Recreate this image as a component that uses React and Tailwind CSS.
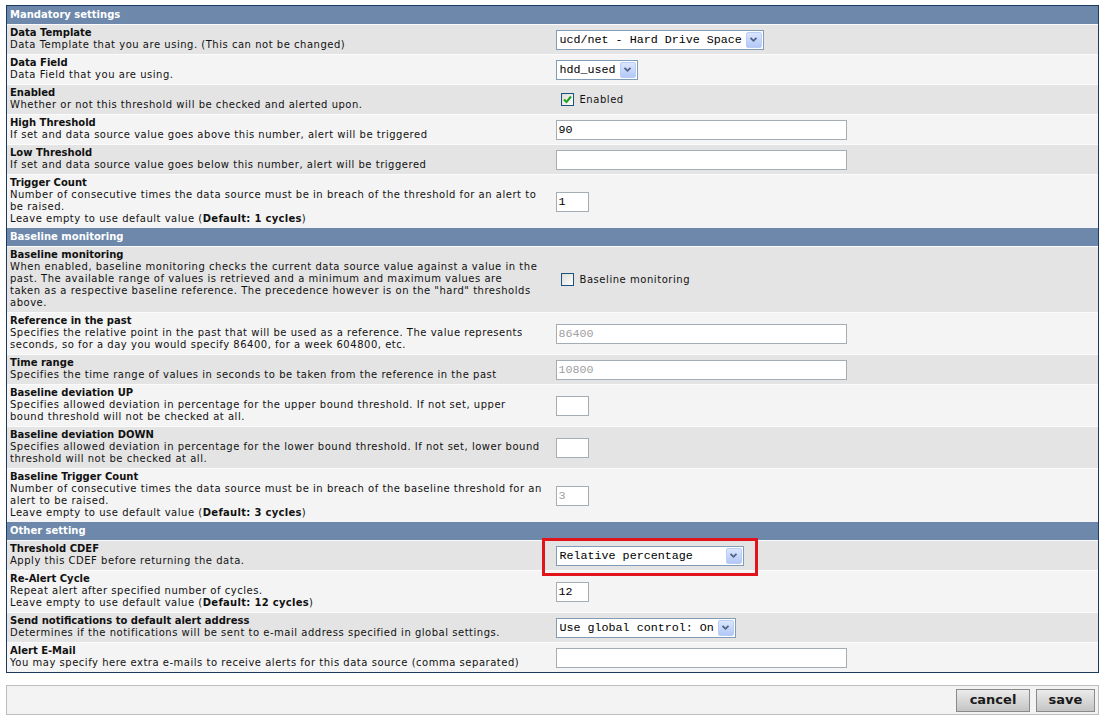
import React from "react";

const F = { fontFamily: '"DejaVu Sans", Verdana, sans-serif' };

function Arrow() {
  return (
    <span className="flex h-[16px] w-[16px] items-center justify-center rounded-[2px] border border-[#b9cdf6] bg-gradient-to-b from-[#dbe6fe] to-[#b3c8f7]">
      <svg width="9" height="7" viewBox="0 0 9 7">
        <path d="M1.5 1.8 L4.5 4.8 L7.5 1.8" fill="none" stroke="#4d6185" strokeWidth="1.8" />
      </svg>
    </span>
  );
}

function Select({ text, w }) {
  return (
    <div
      className={`flex h-[20px] items-center justify-between border border-[#7f9db9] bg-white pl-[3px] pr-[1px] ${w}`}
    >
      <span className="whitespace-pre text-[11.7px] leading-[14px] text-black" style={{ fontFamily: '"Liberation Mono", monospace' }}>
        {text}
      </span>
      <Arrow />
    </div>
  );
}

function Input({ value = "", w = "w-[291px]", gray = false }) {
  return (
    <div
      className={`flex h-[20px] items-center border border-[#a5acb2] bg-white px-[2px] ${w}`}
    >
      <span
        className={`whitespace-pre text-[11.7px] leading-[14px] ${gray ? "text-[#a0a0a0]" : "text-black"}`}
        style={{ fontFamily: '"Liberation Mono", monospace' }}
      >
        {value}
      </span>
    </div>
  );
}

function Check({ checked, label }) {
  return (
    <div className="flex items-center pl-[5px]">
      <span className="flex h-[13px] w-[13px] items-center justify-center border border-[#1c5180] bg-gradient-to-br from-[#dcdcd7] to-white">
        {checked && (
          <svg width="9" height="9" viewBox="0 0 9 9">
            <path d="M1 4.5 L3.5 7 L8 1.5" fill="none" stroke="#21a121" strokeWidth="2" />
          </svg>
        )}
      </span>
      <span className="ml-[6px] text-[10px] leading-[12px] tracking-[0.55px] text-[#111]" style={F}>
        {label}
      </span>
    </div>
  );
}

function Header({ children }) {
  return (
    <div className="flex h-[18px] items-center bg-[#6d88ab] pl-[3px] text-[10px] font-bold leading-[12px] text-white" style={F}>
      {children}
    </div>
  );
}

function Row({ dark, label, lines, children }) {
  return (
    <div
      className={`grid grid-cols-2 border-t border-[#fbfbfb] ${dark ? "bg-[#e4e4e4]" : "bg-[#f4f4f4]"}`}
    >
      <div className="whitespace-nowrap pb-[3px] pl-[3px] pt-[2px] text-[10px] leading-[12px] text-[#111]" style={F}>
        <div className="font-bold">{label}</div>
        {lines.map((l, i) => (
          <div key={i} className="tracking-[0.52px]">{l}</div>
        ))}
      </div>
      <div className="flex items-center pl-[3px]">{children}</div>
    </div>
  );
}

function Def({ children }) {
  return <b className="tracking-[0.3px]">{children}</b>;
}

export default function App() {
  return (
    <div className="h-[728px] w-[1106px] bg-white" style={F}>
      <div className="ml-[6px] mr-[7px] pt-[5px]">
        <div className="border border-[#1c3a5e]">
          <Header>Mandatory settings</Header>
          <Row dark label="Data Template" lines={["Data Template that you are using. (This can not be changed)"]}>
            <Select text="ucd/net - Hard Drive Space" w="w-[208px]" />
          </Row>
          <Row label="Data Field" lines={["Data Field that you are using."]}>
            <Select text="hdd_used" w="w-[82px]" />
          </Row>
          <Row dark label="Enabled" lines={["Whether or not this threshold will be checked and alerted upon."]}>
            <Check checked label="Enabled" />
          </Row>
          <Row label="High Threshold" lines={["If set and data source value goes above this number, alert will be triggered"]}>
            <Input value="90" />
          </Row>
          <Row dark label="Low Threshold" lines={["If set and data source value goes below this number, alert will be triggered"]}>
            <Input />
          </Row>
          <Row
            label="Trigger Count"
            lines={[
              "Number of consecutive times the data source must be in breach of the threshold for an alert to",
              "be raised.",
              <>
                Leave empty to use default value (<Def>Default: 1 cycles</Def>)
              </>,
            ]}
          >
            <Input value="1" w="w-[33px]" />
          </Row>
          <Header>Baseline monitoring</Header>
          <Row
            dark
            label="Baseline monitoring"
            lines={[
              "When enabled, baseline monitoring checks the current data source value against a value in the",
              "past. The available range of values is retrieved and a minimum and maximum values are",
              'taken as a respective baseline reference. The precedence however is on the "hard" thresholds',
              "above.",
            ]}
          >
            <Check label="Baseline monitoring" />
          </Row>
          <Row
            label="Reference in the past"
            lines={[
              "Specifies the relative point in the past that will be used as a reference. The value represents",
              "seconds, so for a day you would specify 86400, for a week 604800, etc.",
            ]}
          >
            <Input value="86400" gray />
          </Row>
          <Row dark label="Time range" lines={["Specifies the time range of values in seconds to be taken from the reference in the past"]}>
            <Input value="10800" gray />
          </Row>
          <Row
            label="Baseline deviation UP"
            lines={[
              "Specifies allowed deviation in percentage for the upper bound threshold. If not set, upper",
              "bound threshold will not be checked at all.",
            ]}
          >
            <Input w="w-[33px]" />
          </Row>
          <Row
            dark
            label="Baseline deviation DOWN"
            lines={[
              "Specifies allowed deviation in percentage for the lower bound threshold. If not set, lower bound",
              "threshold will not be checked at all.",
            ]}
          >
            <Input w="w-[33px]" />
          </Row>
          <Row
            label="Baseline Trigger Count"
            lines={[
              "Number of consecutive times the data source must be in breach of the baseline threshold for an",
              "alert to be raised.",
              <>
                Leave empty to use default value (<Def>Default: 3 cycles</Def>)
              </>,
            ]}
          >
            <Input value="3" gray w="w-[33px]" />
          </Row>
          <Header>Other setting</Header>
          <Row dark label="Threshold CDEF" lines={["Apply this CDEF before returning the data."]}>
            <div className="relative">
              <Select text="Relative percentage" w="w-[188px]" />
              <div className="pointer-events-none absolute left-[-14px] top-[-8px] h-[38px] w-[216px] border-[3px] border-[#e1141c]" />
            </div>
          </Row>
          <Row
            label="Re-Alert Cycle"
            lines={[
              "Repeat alert after specified number of cycles.",
              <>
                Leave empty to use default value (<Def>Default: 12 cycles</Def>)
              </>,
            ]}
          >
            <Input value="12" w="w-[33px]" />
          </Row>
          <Row
            dark
            label="Send notifications to default alert address"
            lines={["Determines if the notifications will be sent to e-mail address specified in global settings."]}
          >
            <Select text="Use global control: On" w="w-[180px]" />
          </Row>
          <Row
            label="Alert E-Mail"
            lines={["You may specify here extra e-mails to receive alerts for this data source (comma separated)"]}
          >
            <Input />
          </Row>
        </div>

        <div className="mt-[12px] flex h-[30px] items-center justify-end gap-[6px] border border-[#bdbdbd] bg-[#f3f3f3] pr-[3px]">
          <button className="h-[23px] w-[74px] border border-[#8a8a8a] bg-gradient-to-b from-[#ececec] to-[#c4c4c4] text-[13px] font-bold text-[#1a1a1a]" style={F}>
            cancel
          </button>
          <button className="h-[23px] w-[59px] border border-[#8a8a8a] bg-gradient-to-b from-[#ececec] to-[#c4c4c4] text-[13px] font-bold text-[#1a1a1a]" style={F}>
            save
          </button>
        </div>
      </div>
    </div>
  );
}
